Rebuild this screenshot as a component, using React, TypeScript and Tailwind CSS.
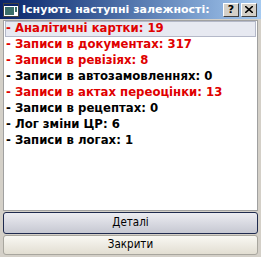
import React from "react";

const items: { text: string; red: boolean }[] = [
  { text: "- Аналітичні картки: 19", red: true },
  { text: "- Записи в документах: 317", red: true },
  { text: "- Записи в ревізіях: 8", red: true },
  { text: "- Записи в автозамовленнях: 0", red: false },
  { text: "- Записи в актах переоцінки: 13", red: true },
  { text: "- Записи в рецептах: 0", red: false },
  { text: "- Лог зміни ЦР: 6", red: false },
  { text: "- Записи в логах: 1", red: false },
];

export default function App() {
  return (
    <div
      className="w-[261px] h-[257px] flex flex-col bg-[#d4d0c8] overflow-hidden"
      style={{ fontFamily: "'DejaVu Sans', sans-serif" }}
    >
      <div className="h-[20px] flex items-center bg-gradient-to-r from-[#0a246a] to-[#a6caf0] pl-[3px] pr-[4px]">
        <svg width="16" height="14" viewBox="0 0 16 14" className="shrink-0">
          <rect x="0.5" y="0.5" width="15" height="13" fill="#ffffff" stroke="#404040" />
          <rect x="1" y="1" width="14" height="2" fill="#0a246a" />
          <rect x="2" y="4" width="9" height="8" fill="#3a6e6a" />
          <rect x="12" y="4" width="2" height="5" fill="#3a6e6a" />
        </svg>
        <span className="ml-[3px] text-white font-bold text-[11px] leading-none whitespace-nowrap">
          Існують наступні залежності:
        </span>
        <div className="ml-auto flex gap-[2px]">
          <div className="w-[16px] h-[14px] bg-[#d4d0c8] border border-t-white border-l-white border-r-[#404040] border-b-[#404040] flex items-center justify-center text-[11px] font-bold leading-none text-black">
            ?
          </div>
          <div className="w-[16px] h-[14px] bg-[#d4d0c8] border border-t-white border-l-white border-r-[#404040] border-b-[#404040] flex items-center justify-center">
            <svg width="8" height="7" viewBox="0 0 8 7">
              <path d="M0 0 L8 7 M8 0 L0 7" stroke="#000" strokeWidth="1.6" />
            </svg>
          </div>
        </div>
      </div>
      <div className="flex-1 flex flex-col px-[3px] pt-[1px] pb-[2px]">
        <div className="h-[191px] bg-white border border-[#a0a0a0] px-[1px] pt-[0px]">
          {items.map((it, i) => (
            <div
              key={i}
              className={
                "h-[16px] flex items-center font-bold text-[11.7px] whitespace-nowrap " +
                (it.red ? "text-[#e00000] " : "text-black ") +
                (i === 0 ? "bg-[#e7e9f1] border border-[#b4b8c8] pl-0" : "pl-[1px]")
              }
            >
              {it.text}
            </div>
          ))}
        </div>
        <button
          className="mt-[1px] h-[22px] rounded-[3px] border border-[#1e2a4e] bg-gradient-to-b from-[#ececf1] to-[#c6c8d2] text-[11.5px] text-black leading-none"
          style={{ fontFamily: "'DejaVu Sans Condensed', 'DejaVu Sans', sans-serif" }}
        >
          Деталі
        </button>
        <button
          className="mt-[1px] h-[20px] rounded-[3px] border border-[#a8a69e] bg-gradient-to-b from-[#f9f8f3] to-[#e2ded2] text-[11.5px] text-black leading-none"
          style={{ fontFamily: "'DejaVu Sans Condensed', 'DejaVu Sans', sans-serif" }}
        >
          Закрити
        </button>
      </div>
    </div>
  );
}
